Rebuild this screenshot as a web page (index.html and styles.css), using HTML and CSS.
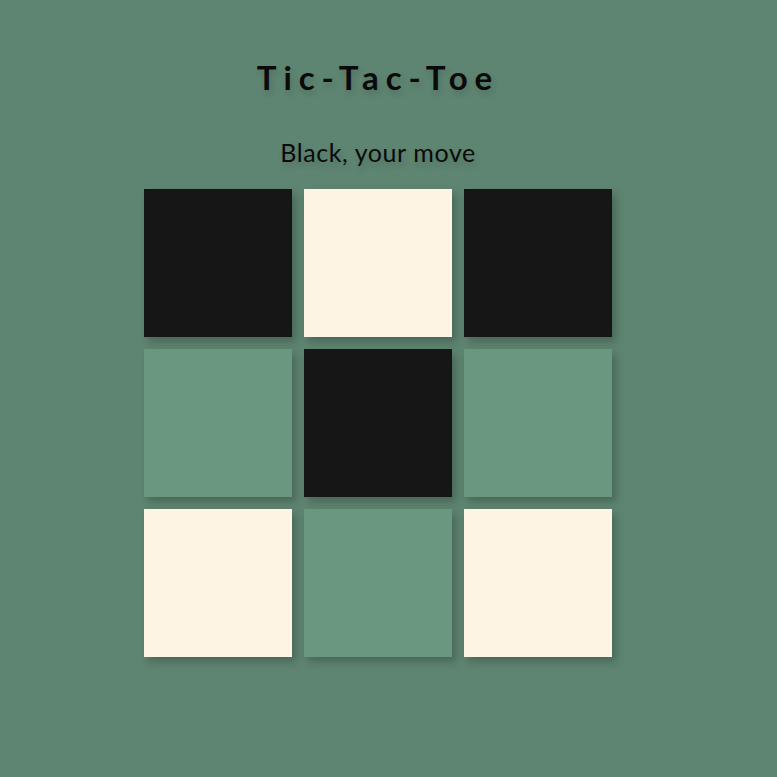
FILE: index.html
```html
<!DOCTYPE html>
<html>
<head>
<meta charset="utf-8">
<link rel="stylesheet" href="styles.css">
</head>
<body>
<main class="game">
  <h1 class="title">Tic-Tac-Toe</h1>
  <p class="status">Black, your move</p>
  <div class="board">
    <div class="cell black"></div>
    <div class="cell white"></div>
    <div class="cell black"></div>
    <div class="cell"></div>
    <div class="cell black"></div>
    <div class="cell"></div>
    <div class="cell white"></div>
    <div class="cell"></div>
    <div class="cell white"></div>
  </div>
</main>
</body>
</html>
```
FILE: styles.css
```css
html, body {
  margin: 0;
  padding: 0;
  height: 100%;
  background: #5e8571;
}
body {
  font-family: "Lato", "Noto Sans", sans-serif;
  color: #0a0a0a;
}
.game {
  width: 756px;
  display: flex;
  flex-direction: column;
  align-items: center;
}
.title {
  margin: 57px 0 0;
  font-size: 33px;
  font-weight: 700;
  letter-spacing: 7px;
  line-height: 40px;
  text-shadow: 2px 4px 6px rgba(0, 0, 0, 0.15);
}
.status {
  margin: 40px 0 0;
  font-size: 25px;
  letter-spacing: 0.6px;
  line-height: 30px;
  text-shadow: 2px 4px 6px rgba(0, 0, 0, 0.15);
}
.board {
  margin-top: 22px;
  display: grid;
  grid-template-columns: repeat(3, 148px);
  grid-template-rows: repeat(3, 148px);
  gap: 12px;
}
.cell {
  background: #6a977f;
  box-shadow: 4px 5px 8px rgba(0, 0, 0, 0.22);
}
.cell.black {
  background: #161616;
}
.cell.white {
  background: #fdf4e4;
}
```
